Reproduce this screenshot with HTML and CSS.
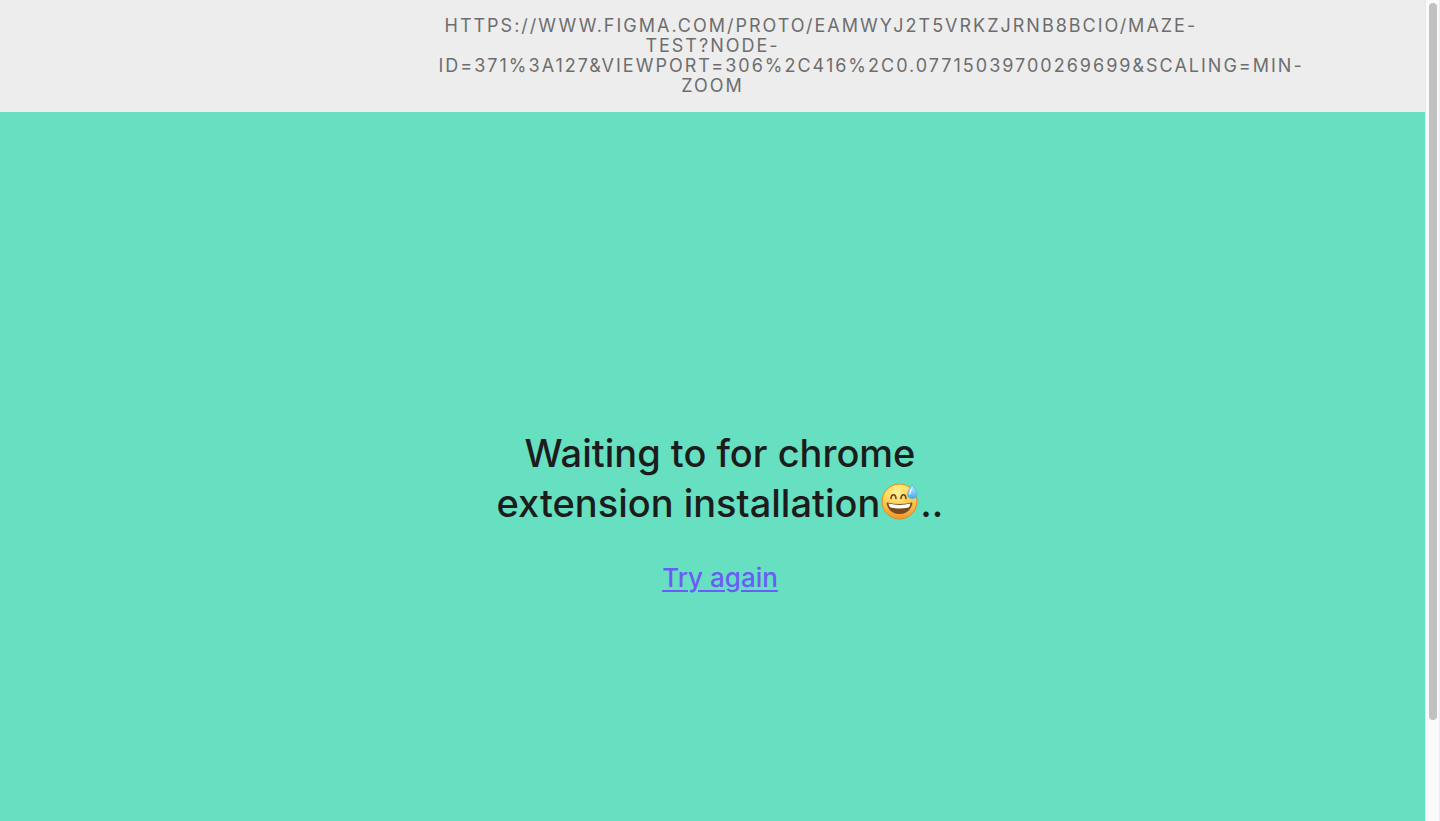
FILE: index.html
```
<!DOCTYPE html>
<html lang="en">
<head>
<meta charset="utf-8">
<title>Waiting for extension</title>
<link rel="stylesheet" href="styles.css">
</head>
<body>
<div class="shell">
  <div class="page">
    <header class="topbar">
      <div class="address">https://www.figma.com/proto/EAMwyj2t5VRkzJRNb8bCIO/Maze-<br>Test?node-<br>id=371%3A127&amp;viewport=306%2C416%2C0.07715039700269699&amp;scaling=min-<br>zoom</div>
    </header>
    <main class="stage">
      <h1 class="message">Waiting to for chrome<br>extension installation<svg class="emoji" viewBox="0 0 38 38" role="img" aria-label="Grinning face with sweat">
        <defs>
          <linearGradient id="face" x1="0" y1="0" x2="0" y2="1"><stop offset="0" stop-color="#ffe36a"/><stop offset=".55" stop-color="#fbc64b"/><stop offset="1" stop-color="#ee972f"/></linearGradient>
          <radialGradient id="glow" cx=".42" cy=".28" r=".5"><stop offset="0" stop-color="#fff6a5" stop-opacity=".9"/><stop offset="1" stop-color="#ffe36a" stop-opacity="0"/></radialGradient>
          <linearGradient id="drop" x1="0" y1="0" x2="0" y2="1"><stop offset="0" stop-color="#d5f3ff"/><stop offset="1" stop-color="#42a5ee"/></linearGradient>
        </defs>
        <circle cx="18.500" cy="19.500" r="17.500" fill="url(#face)" stroke="#d98e25"/>
        <circle cx="18.500" cy="19" r="16" fill="url(#glow)"/>
        <path d="M10 16.500c.5-5 4.500-5 5 0M20 16.500c.5-5 4.500-5 5 0" fill="none" stroke="#70421b" stroke-width="1.600" stroke-linecap="round"/>
        <path d="M6.500 20.500q12 3 24 0c1 0 1 1 .5 2.500C29 29 24.500 32 18.500 32S8 29 6 23c-.5-1.500-.5-2.500.5-2.500z" fill="#7a4a1d"/>
        <path d="M7.500 21.500q11 2.800 22 0-.2 3-2 4-9 1.800-18 0-1.800-1-2-4z" fill="#fff"/>
        <path d="M31 2.500c1 3 5 6 5 9.500 0 3-2 4.700-4.600 4.700S26.500 15 26.500 12.500c0-3.500 3.700-7 4.500-10z" fill="url(#drop)" stroke="#52afe9" stroke-width=".7"/>
        <path d="M30.500 7q-1.500 2.500-1.700 5" fill="none" stroke="#fff" stroke-width="1.200" stroke-linecap="round"/>
      </svg>..</h1>
      <a class="retry" href="#">Try again</a>
    </main>
  </div>
  <div class="scrollbar" aria-hidden="true"><div class="thumb"></div></div>
</div>
</body>
</html>
```
FILE: styles.css
```
body {
  margin: 0;
  font-family: Inter, "Liberation Sans", sans-serif;
  color: #1c1c1c;
}
.shell {
  display: grid;
  grid-template-columns: minmax(0, 1fr) 15px;
  height: 100vh;
  overflow: hidden;
}
.page {
  min-width: 0;
  overflow: hidden;
  background: #66e0c1;
}
.topbar {
  display: flex;
  justify-content: center;
  padding: 16px;
  background: #ededed;
}
.address {
  width: 548px;
  font-size: 18px;
  line-height: 20px;
  letter-spacing: 2px;
  text-align: center;
  text-transform: uppercase;
  text-indent: 6px;
  white-space: nowrap;
  color: #6d6d6d;
}
.stage {
  box-sizing: border-box;
  min-height: 100vh;
  padding-left: 15px;
  display: flex;
  flex-direction: column;
  align-items: center;
  justify-content: center;
  gap: 32px;
}
.message {
  margin: 0;
  font-size: 38px;
  line-height: 50px;
  font-weight: 500;
  text-align: center;
}
.emoji {
  width: 38px;
  height: 38px;
  margin: 0 1px;
  vertical-align: -3px;
}
.retry {
  padding-bottom: 22px;
  font-size: 26px;
  line-height: 36px;
  font-weight: 500;
  color: #6a5df7;
  text-decoration-thickness: 2px;
  text-underline-offset: 3px;
}
.scrollbar {
  box-sizing: border-box;
  padding: 3px 2px;
  background: #fafafa;
  border-left: 1px solid #e8e8e8;
  border-right: 1px solid #ededed;
}
.thumb {
  width: 8px;
  height: 88%;
  margin: 0 auto;
  border-radius: 4px;
  background: #c1c1c1;
}
```
